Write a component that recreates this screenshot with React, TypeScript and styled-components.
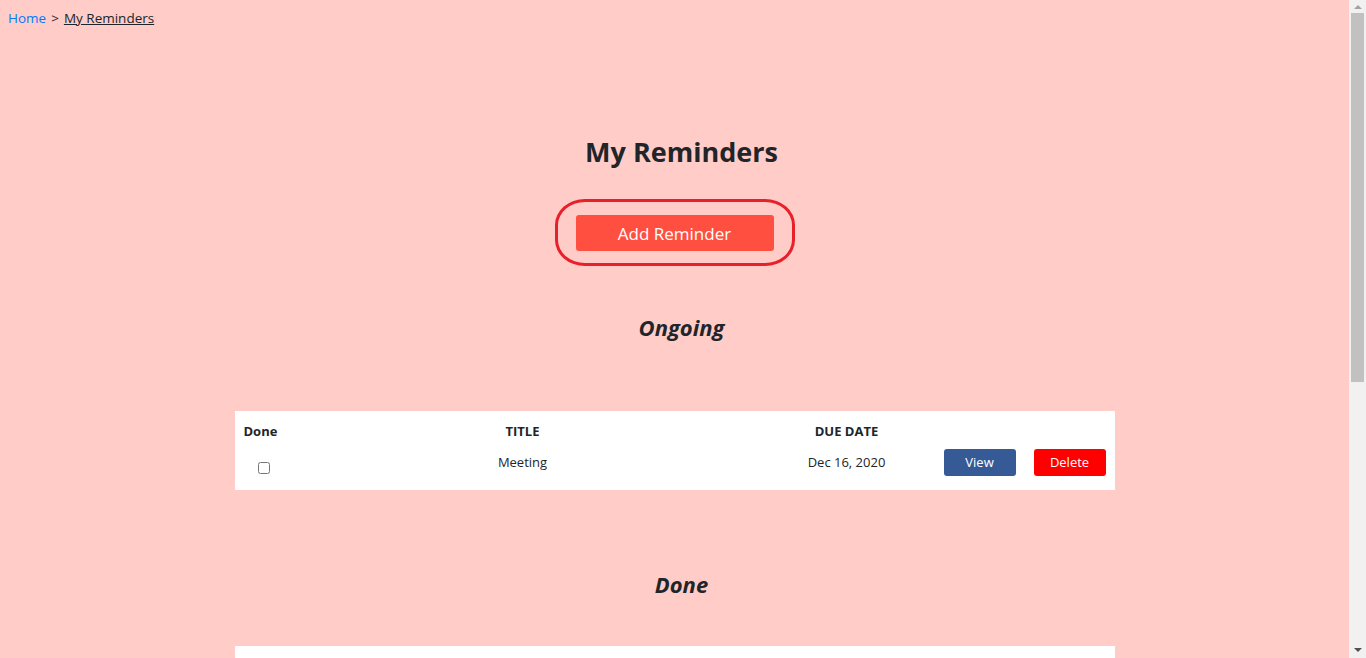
import React from "react";
import styled, { createGlobalStyle } from "styled-components";

const Global = createGlobalStyle`
  html, body { margin: 0; padding: 0; }
  body {
    background: #ffccc8;
    font-family: "Open Sans", "Noto Sans", sans-serif;
    color: #212529;
  }
`;

const Page = styled.div`
  width: calc(100vw - 17px);
  box-sizing: border-box;
  padding: 8px 8px 80px 8px;
`;

const Breadcrumb = styled.nav`
  font-size: 13.5px;
  line-height: 20px;
  display: flex;
  gap: 5px;
`;

const Crumb = styled.a<{ $current?: boolean }>`
  color: ${(p) => (p.$current ? "#212529" : "#007bff")};
  text-decoration: ${(p) => (p.$current ? "underline" : "none")};
`;

const Main = styled.main`
  display: flex;
  flex-direction: column;
  align-items: center;
`;

const Title = styled.h1`
  font-size: 27px;
  font-weight: 700;
  margin: 106px 0 0 14px;
  line-height: 36px;
`;

const Annotation = styled.div`
  margin-top: 29px;
  border: 3px solid #e8202a;
  border-radius: 30px / 26px;
  padding: 13px 18px 12px;
`;

const AddButton = styled.button`
  width: 198px;
  height: 36px;
  border: none;
  border-radius: 3px;
  background: #ff4f40;
  color: #fff;
  font-family: inherit;
  font-size: 17px;
`;

const Section = styled.h3<{ $top: number }>`
  font-size: 22px;
  font-weight: 700;
  font-style: italic;
  margin: ${(p) => p.$top}px 0 0 14px;
  line-height: 28px;
`;

const Table = styled.div<{ $top: number; $minH?: number }>`
  width: 880px;
  background: #fff;
  margin-top: ${(p) => p.$top}px;
  display: grid;
  grid-template-columns: 59px 458px 190px 76px 97px;
  align-items: center;
  min-height: ${(p) => p.$minH ?? 0}px;
  align-content: start;
  padding-bottom: 10px;
  box-sizing: border-box;
`;

const Head = styled.div<{ $left?: boolean }>`
  font-size: 13px;
  font-weight: 700;
  text-align: ${(p) => (p.$left ? "left" : "center")};
  padding: 12px 0 0 ${(p) => (p.$left ? "9px" : "0")};
  height: 29px;
  line-height: 16px;
  box-sizing: border-box;
`;

const Cell = styled.div<{ $shift?: number }>`
  font-size: 13px;
  text-align: center;
  display: flex;
  justify-content: center;
  align-items: center;
  height: 40px;
  padding-top: 4px;
  padding-left: ${(p) => p.$shift ?? 0}px;
  box-sizing: border-box;
`;

const Check = styled.input`
  margin: 12px 0 0 0;
  width: 12px;
  height: 12px;
`;

const RowButton = styled.button<{ $color: string }>`
  width: 72px;
  height: 27px;
  border: none;
  border-radius: 3px;
  background: ${(p) => p.$color};
  color: #fff;
  font-family: inherit;
  font-size: 13px;
`;

const ScrollTrack = styled.div`
  position: fixed;
  top: 0;
  right: 0;
  width: 17px;
  height: 100vh;
  background: #f1f1f1;
  display: flex;
  flex-direction: column;
  align-items: center;
`;

const Arrow = styled.div<{ $down?: boolean }>`
  width: 0;
  height: 0;
  border-left: 4px solid transparent;
  border-right: 4px solid transparent;
  ${(p) =>
    p.$down
      ? "border-top: 4px solid #505050; margin-top: auto; margin-bottom: 6px;"
      : "border-bottom: 4px solid #a3a3a3; margin-top: 5px;"}
`;

const Thumb = styled.div`
  width: 13px;
  height: 369px;
  margin-top: 4px;
  background: #c1c1c1;
`;

export default function App() {
  return (
    <>
      <Global />
      <Page>
        <Breadcrumb>
          <Crumb href="#">Home</Crumb>
          <span>&gt;</span>
          <Crumb href="#" $current>
            My Reminders
          </Crumb>
        </Breadcrumb>
        <Main>
          <Title>My Reminders</Title>
          <Annotation>
            <AddButton>Add Reminder</AddButton>
          </Annotation>
          <Section $top={47}>Ongoing</Section>
          <Table $top={70}>
            <Head $left>Done</Head>
            <Head>TITLE</Head>
            <Head>DUE DATE</Head>
            <Head />
            <Head />
            <Cell>
              <Check type="checkbox" />
            </Cell>
            <Cell>Meeting</Cell>
            <Cell>Dec 16, 2020</Cell>
            <Cell>
              <RowButton $color="#365a96">View</RowButton>
            </Cell>
            <Cell $shift={7}>
              <RowButton $color="#ff0000">Delete</RowButton>
            </Cell>
          </Table>
          <Section $top={80}>Done</Section>
          <Table $top={48} $minH={60}>
            <Head $left>Done</Head>
            <Head>TITLE</Head>
            <Head>DUE DATE</Head>
            <Head />
            <Head />
          </Table>
        </Main>
      </Page>
      <ScrollTrack>
        <Arrow />
        <Thumb />
        <Arrow $down />
      </ScrollTrack>
    </>
  );
}
